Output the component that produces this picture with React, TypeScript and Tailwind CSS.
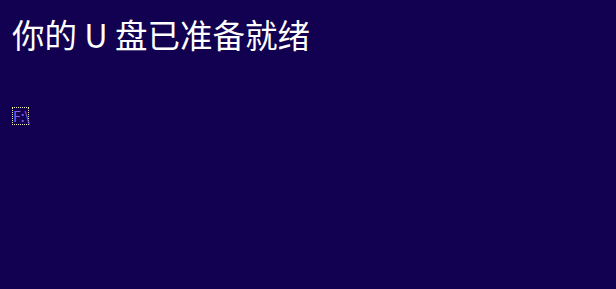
export default function App() {
  return (
    <div className="min-h-[289px] w-full bg-[#120050] px-3 pt-[13px] font-['Segoe_UI','Noto_Sans_CJK_SC',sans-serif] text-white">
      <h1 className="text-[32.5px] leading-[42px] font-normal">你的 U 盘已准备就绪</h1>
      <div className="mt-[52px] flex">
        <button className="h-[18px] w-[17px] border border-dotted border-[#f0f0a0] text-[14px] leading-[16px] text-[#8a62f0]">
          F:\
        </button>
      </div>
    </div>
  )
}
